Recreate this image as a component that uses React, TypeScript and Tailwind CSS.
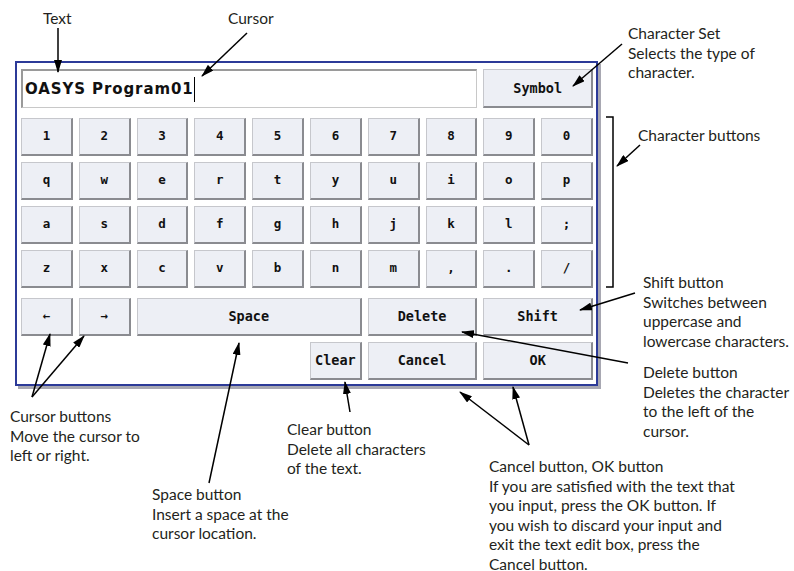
import React from "react";

const mono = { fontFamily: '"DejaVu Sans Mono", "Liberation Mono", monospace' };
const ann = { fontFamily: 'Lato, "Noto Sans", "Liberation Sans", sans-serif' };

function Key({ label, span = "col-span-1", big = false }: { label: string; span?: string; big?: boolean }) {
  return (
    <div
      className={`${span} h-[38px] flex items-center justify-center bg-[#edeff5] border-t border-l border-t-[#c6c7cc] border-l-[#c6c7cc] border-b-2 border-r-2 border-b-[#8a8b90] border-r-[#8a8b90] font-bold text-[#111] ${big ? "text-[13.5px]" : "text-[12.5px]"}`}
      style={mono}
    >
      {label}
    </div>
  );
}

const rows = [
  ["1", "2", "3", "4", "5", "6", "7", "8", "9", "0"],
  ["q", "w", "e", "r", "t", "y", "u", "i", "o", "p"],
  ["a", "s", "d", "f", "g", "h", "j", "k", "l", ";"],
  ["z", "x", "c", "v", "b", "n", "m", ",", ".", "/"],
];

type Arrow = [number, number, number, number];
const arrows: Arrow[] = [
  [58, 28, 58, 72],
  [247, 33, 202, 76],
  [622, 44, 573, 86],
  [640, 145, 617, 166],
  [635, 293, 580, 310],
  [628, 363, 462, 332],
  [32, 397, 50, 334],
  [32, 397, 84, 336],
  [209, 483, 239, 343],
  [350, 412, 345, 382],
  [529, 445, 460, 392],
  [529, 445, 513, 387],
];

function Note({ x, y, lines }: { x: number; y: number; lines: string[] }) {
  return (
    <div
      className="absolute text-[15.5px] leading-[19.5px] text-[#231f20] whitespace-nowrap"
      style={{ ...ann, left: x, top: y }}
    >
      {lines.map((l, i) => (
        <div key={i}>{l}</div>
      ))}
    </div>
  );
}

export default function App() {
  return (
    <div className="relative w-[794px] h-[571px] bg-white overflow-hidden">
      <div className="pt-[61px] pl-[15px]">
        <div className="w-[583px] h-[325px] bg-white border-2 border-[#2c3a98] shadow-[3px_3px_0_#a8a8b2] pt-[6px] pl-[4px] pr-[3px] pb-[4px]">
          <div className="grid grid-cols-10 gap-x-[6px]">
            <div
              className="col-span-8 h-[39px] flex items-center pl-[2px] bg-white border-t-2 border-l-2 border-t-[#9a9a9a] border-l-[#9a9a9a] border-b border-r border-b-[#c8c8c8] border-r-[#c8c8c8] text-[15px] font-bold tracking-[0.9px] text-[#111]"
              style={{ fontFamily: '"DejaVu Sans", "Liberation Sans", sans-serif' }}
            >
              <span>OASYS Program01</span>
              <span className="inline-block w-px h-[25px] bg-black" />
            </div>
            <div className="col-span-2 h-[39px] flex items-center justify-center bg-[#edeff5] border-t border-l border-t-[#c6c7cc] border-l-[#c6c7cc] border-b-2 border-r-2 border-b-[#8a8b90] border-r-[#8a8b90] font-bold text-[13.5px] text-[#111]" style={mono}>
              Symbol
            </div>
          </div>
          <div className="grid grid-cols-10 gap-x-[6px] gap-y-[6px] mt-[10px]">
            {rows.flat().map((k, i) => (
              <Key key={i} label={k} />
            ))}
          </div>
          <div className="grid grid-cols-10 gap-x-[6px] gap-y-[6px] mt-[10px]">
            <Key label="←" />
            <Key label="→" />
            <Key label="Space" span="col-span-4" big />
            <Key label="Delete" span="col-span-2" big />
            <Key label="Shift" span="col-span-2" big />
            <div className="col-span-5" />
            <Key label="Clear" big />
            <Key label="Cancel" span="col-span-2" big />
            <Key label="OK" span="col-span-2" big />
          </div>
        </div>
      </div>

      <svg className="absolute inset-0 pointer-events-none" width="794" height="571" viewBox="0 0 794 571">
        <defs>
          <marker id="ah" viewBox="0 0 13 8" refX="12" refY="4" markerWidth="13" markerHeight="8" markerUnits="userSpaceOnUse" orient="auto">
            <path d="M0 0 L13 4 L0 8 Z" fill="#000" />
          </marker>
        </defs>
        {arrows.map(([x1, y1, x2, y2], i) => (
          <line key={i} x1={x1} y1={y1} x2={x2} y2={y2} stroke="#000" strokeWidth="1.5" markerEnd="url(#ah)" />
        ))}
        <polyline points="606,117 613,117 613,287 606,287" fill="none" stroke="#000" strokeWidth="1.5" />
      </svg>

      <Note x={43} y={9} lines={["Text"]} />
      <Note x={228} y={9} lines={["Cursor"]} />
      <Note x={628} y={24} lines={["Character Set", "Selects the type of", "character."]} />
      <Note x={638} y={126} lines={["Character buttons"]} />
      <Note x={643} y={273} lines={["Shift button", "Switches between", "uppercase and", "lowercase characters."]} />
      <Note x={643} y={363} lines={["Delete button", "Deletes the character", "to the left of the", "cursor."]} />
      <Note x={10} y={407} lines={["Cursor buttons", "Move the cursor to", "left or right."]} />
      <Note x={287} y={420} lines={["Clear button", "Delete all characters", "of the text."]} />
      <Note x={152} y={485} lines={["Space button", "Insert a space at the", "cursor location."]} />
      <Note
        x={489}
        y={457}
        lines={[
          "Cancel button, OK button",
          "If you are satisfied with the text that",
          "you input, press the OK button. If",
          "you wish to discard your input and",
          "exit the text edit box, press the",
          "Cancel button.",
        ]}
      />
    </div>
  );
}
